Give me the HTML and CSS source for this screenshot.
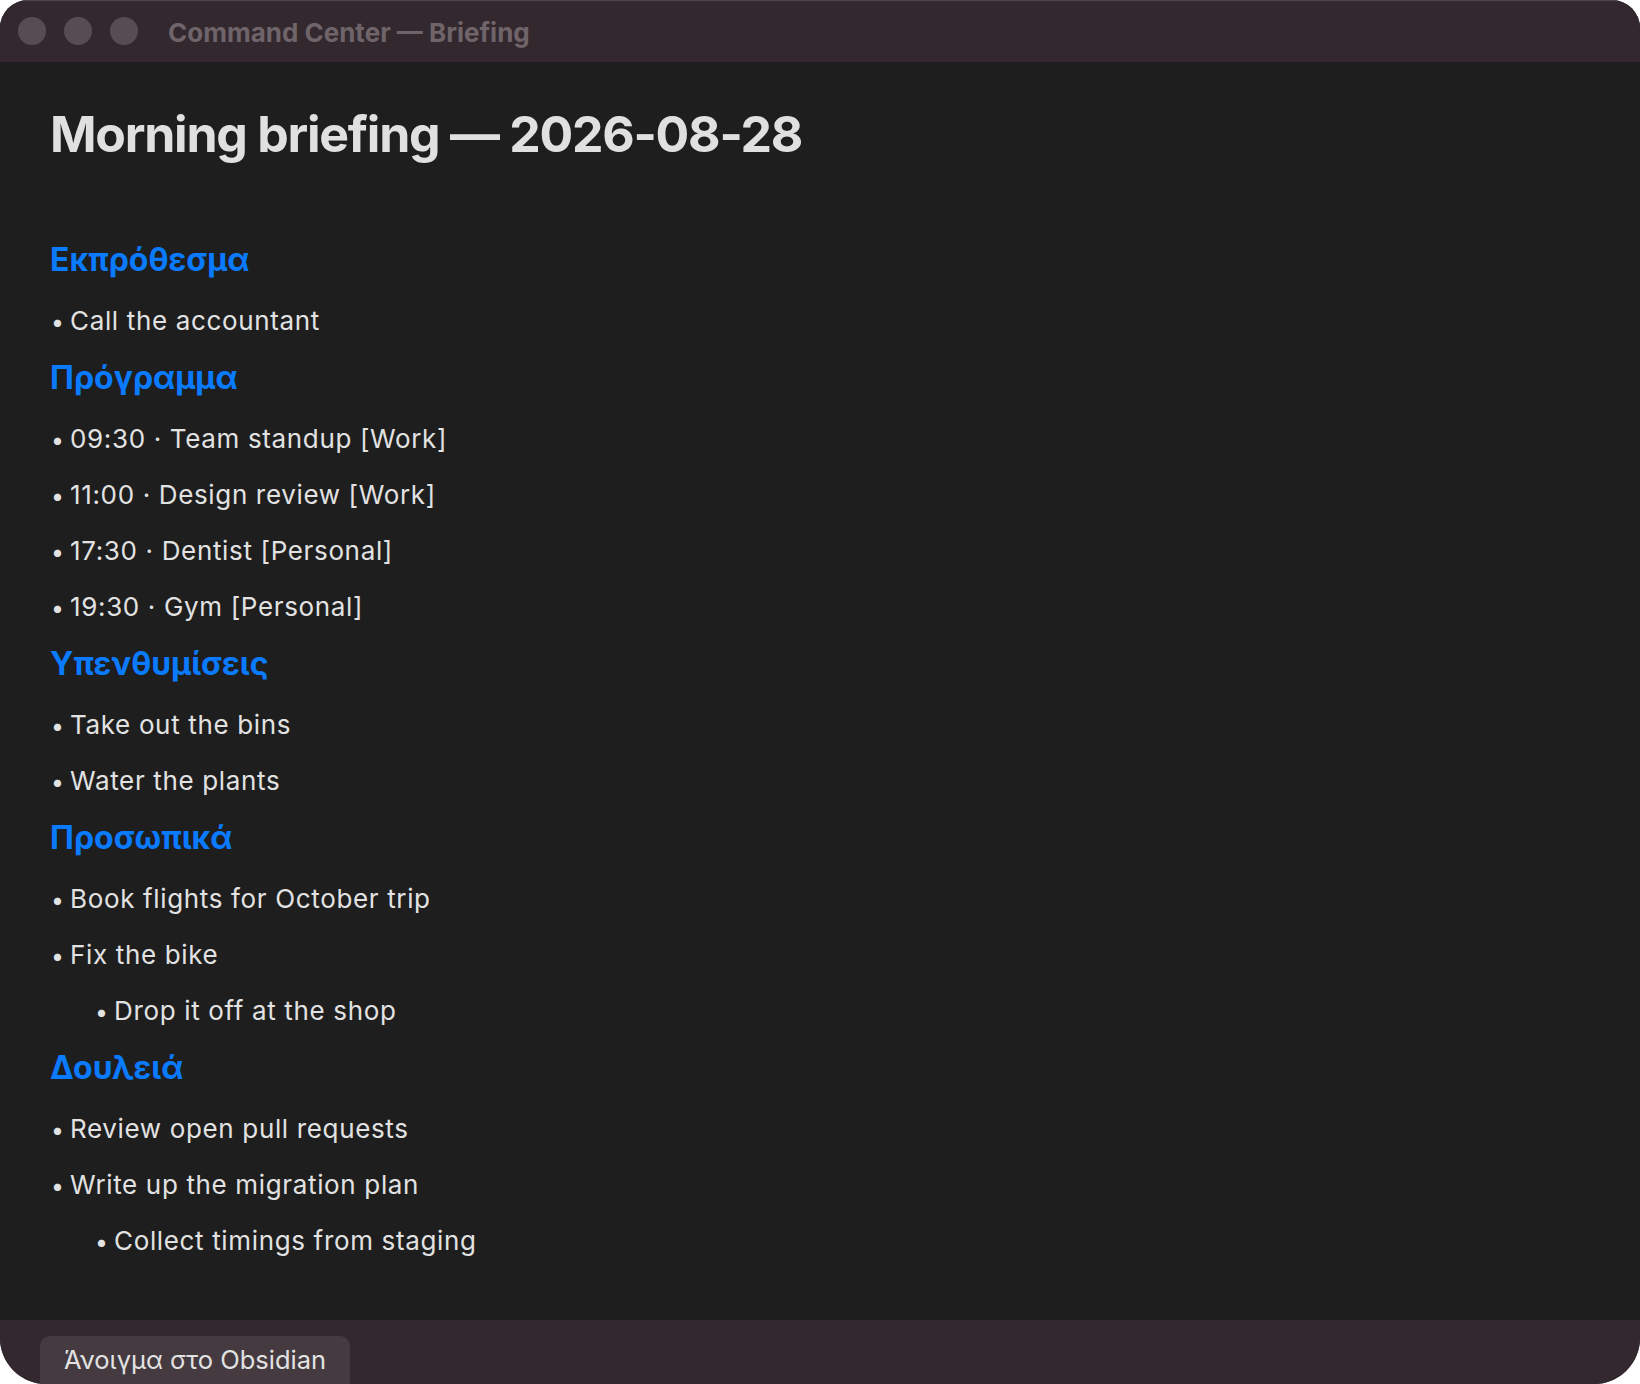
FILE: index.html
```html
<!DOCTYPE html>
<html lang="el">
<head>
<meta charset="utf-8">
<title>Command Center — Briefing</title>
<link rel="stylesheet" href="styles.css">
</head>
<body>
<div class="window">
  <header class="titlebar">
    <div class="lights">
      <span class="light"></span>
      <span class="light"></span>
      <span class="light"></span>
    </div>
    <div class="wintitle">Command Center — Briefing</div>
  </header>
  <main class="content">
    <h1 class="title">Morning briefing — 2026-08-28</h1>
    <section>
      <h2 class="heading">Εκπρόθεσμα</h2>
      <ul class="list">
        <li>Call the accountant</li>
      </ul>
    </section>
    <section>
      <h2 class="heading">Πρόγραμμα</h2>
      <ul class="list">
        <li>09:30 · Team standup [Work]</li>
        <li>11:00 · Design review [Work]</li>
        <li>17:30 · Dentist [Personal]</li>
        <li>19:30 · Gym [Personal]</li>
      </ul>
    </section>
    <section>
      <h2 class="heading">Υπενθυμίσεις</h2>
      <ul class="list">
        <li>Take out the bins</li>
        <li>Water the plants</li>
      </ul>
    </section>
    <section>
      <h2 class="heading">Προσωπικά</h2>
      <ul class="list">
        <li>Book flights for October trip</li>
        <li>Fix the bike</li>
        <li class="sub">Drop it off at the shop</li>
      </ul>
    </section>
    <section>
      <h2 class="heading">Δουλειά</h2>
      <ul class="list">
        <li>Review open pull requests</li>
        <li>Write up the migration plan</li>
        <li class="sub">Collect timings from staging</li>
      </ul>
    </section>
  </main>
  <footer class="footer">
    <button class="btn">Άνοιγμα στο Obsidian</button>
  </footer>
</div>
</body>
</html>
```

FILE: styles.css
```css
html, body {
  margin: 0;
  padding: 0;
  background: #ffffff;
}
body {
  width: 1640px;
  height: 1384px;
  overflow: hidden;
  font-family: Inter, "Noto Sans", "DejaVu Sans", sans-serif;
}
.window {
  width: 1640px;
  height: 1384px;
  border-radius: 28px 28px 46px 46px;
  overflow: hidden;
  display: flex;
  flex-direction: column;
  background: #1e1e1e;
}
.titlebar {
  height: 62px;
  flex: 0 0 62px;
  box-sizing: border-box;
  background: #33282e;
  box-shadow: inset 0 1px 0 rgba(255, 255, 255, 0.14);
  display: flex;
  align-items: center;
  padding-left: 18px;
}
.lights {
  display: flex;
  gap: 18px;
}
.light {
  width: 28px;
  height: 28px;
  border-radius: 50%;
  background: #574c53;
}
.wintitle {
  margin-left: 30px;
  font-size: 26px;
  line-height: 32px;
  font-weight: 700;
  color: #6f6469;
  padding-top: 3px;
}
.content {
  flex: 1 1 auto;
  background: #1e1e1e;
  padding: 42px 0 0 50px;
  box-sizing: border-box;
  color: #e0e0e0;
}
.title {
  margin: 0 0 74px 0;
  font-size: 50px;
  line-height: 60px;
  font-weight: 700;
  color: #e0e0e0;
  letter-spacing: -1.25px;
}
.heading {
  margin: 7px 0 11px 0;
  font-size: 32px;
  line-height: 44px;
  font-weight: 700;
  color: #0a7aff;
}
section:first-of-type .heading {
  margin-top: 0;
}
.list {
  list-style: none;
  margin: 0;
  padding: 0;
}
.list li {
  font-size: 26px;
  line-height: 56px;
  height: 56px;
  color: #e2e2e2;
  letter-spacing: 0.65px;
}
.list li::before {
  content: "•";
  display: inline-block;
  width: 20px;
  padding-left: 1px;
  box-sizing: border-box;
  font-size: 23px;
  letter-spacing: 0;
}
.list li.sub {
  padding-left: 44px;
}
.footer {
  height: 64px;
  flex: 0 0 64px;
  background: #33282e;
  box-sizing: border-box;
  padding: 16px 0 0 40px;
}
.btn {
  font-family: Inter, "Noto Sans", "DejaVu Sans", sans-serif;
  font-size: 25.5px;
  line-height: 32px;
  color: #e2e2e2;
  background: #443a40;
  border: none;
  border-radius: 10px;
  padding: 8px 24px 20px 24px;
  margin: 0;
  display: block;
}
```
